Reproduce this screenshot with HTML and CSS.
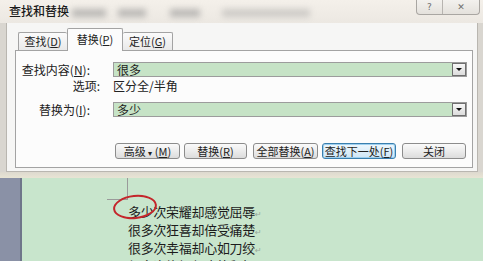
FILE: index.html
```html
<!DOCTYPE html>
<html lang="zh-CN">
<head>
    <meta charset="UTF-8">
    <title>查找和替换</title>
    <link rel="stylesheet" href="styles.css">
</head>
<body>
    <div class="window">
        <div class="titlebar">
            <span class="title">查找和替换</span>
            <span class="blur b1"></span>
            <span class="blur b2"></span>
            <span class="blur b3"></span>
            <span class="blur b4"></span>
            <div class="caption">
                <span class="cap-btn help">?</span>
                <span class="cap-btn close">✕</span>
            </div>
        </div>
        <div class="dialog">
            <div class="tabs">
                <span class="tab t1">查找(<u>D</u>)</span>
                <span class="tab active">替换(<u>P</u>)</span>
                <span class="tab t3">定位(<u>G</u>)</span>
            </div>
            <div class="panel">
                <div class="row">
                    <label class="lbl">查找内容(<u>N</u>):</label>
                    <div class="combo">
                        <span class="value">很多</span>
                        <span class="drop"></span>
                    </div>
                </div>
                <div class="row opts">
                    <span class="lbl short">选项:</span>
                    <span class="value">区分全/半角</span>
                </div>
                <div class="row replace">
                    <label class="lbl">替换为(<u>I</u>):</label>
                    <div class="combo">
                        <span class="value">多少</span>
                        <span class="drop"></span>
                    </div>
                </div>
                <div class="buttons">
                    <button class="btn w65">高级 <span class="arrow">▾</span> (<u>M</u>)</button>
                    <button class="btn w63">替换(<u>R</u>)</button>
                    <button class="btn w65 gap6">全部替换(<u>A</u>)</button>
                    <button class="btn w74 focus">查找下一处(<u>F</u>)</button>
                    <button class="btn w64 gap6">关闭</button>
                </div>
            </div>
        </div>
        <div class="frame-bottom"></div>
    </div>
    <div class="document">
        <div class="ruler"></div>
        <div class="page">
            <div class="text">
                <span class="corner"></span>
                <span class="circle"></span>
                <p>多少次荣耀却感觉屈辱<span class="mark">↵</span></p>
                <p>很多次狂喜却倍受痛楚<span class="mark">↵</span></p>
                <p>很多次幸福却心如刀绞<span class="mark">↵</span></p>
                <p>很多次坎坷却也能释怀<span class="mark">↵</span></p>
            </div>
        </div>
    </div>
</body>
</html>
```

FILE: styles.css
```css
* {
    box-sizing: border-box;
}
body {
    margin: 0;
    width: 483px;
    height: 261px;
    overflow: hidden;
    background-color: #c8e5cc;
    font-family: "Noto Sans CJK SC", sans-serif;
    font-size: 12px;
    color: #222;
}
.window {
    background-color: #d9d6d0;
}
.titlebar {
    height: 23px;
    display: flex;
    align-items: flex-start;
    position: relative;
    background: linear-gradient(to bottom, #f4f0ea, #ece8e2);
}
.title {
    margin: 3px 0 0 9px;
    font-size: 12px;
    line-height: 16px;
    color: #1a1a1a;
    font-weight: 500;
}
.blur {
    position: absolute;
    top: 9px;
    height: 8px;
    background-color: #8e8e8e;
    filter: blur(3px);
    opacity: 0.55;
}
.b1 { left: 72px; width: 34px; }
.b2 { left: 118px; width: 28px; }
.b3 { left: 170px; width: 30px; }
.b4 { left: 222px; width: 88px; opacity: 0.35; }
.caption {
    margin-left: auto;
    margin-right: 3px;
    display: flex;
    height: 15px;
    border: 1px solid #a9a6a2;
    border-top: none;
    border-radius: 0 0 4px 4px;
    background: linear-gradient(to bottom, #f3f1ee, #e4e1dc);
}
.cap-btn {
    display: flex;
    align-items: center;
    justify-content: center;
    font-family: "DejaVu Sans", sans-serif;
    font-size: 9px;
    color: #6e6e6e;
}
.help {
    width: 26px;
    border-right: 1px solid #b7b4b0;
}
.close {
    width: 36px;
}
.dialog {
    margin: 0 5px 0 6px;
    height: 149px;
    padding: 5px 4px 0 8px;
    border: 1px solid #b9b6b0;
    border-top: none;
    background-color: #f6f6f5;
}
.tabs {
    display: flex;
    align-items: flex-end;
    height: 22px;
    padding-left: 3px;
    position: relative;
    z-index: 1;
}
.tab {
    height: 18px;
    line-height: 17px;
    text-align: center;
    white-space: nowrap;
    font-size: 11px;
    border: 1px solid #a3a3a3;
    border-bottom: none;
    border-right: none;
    background: linear-gradient(to bottom, #fbfbfb, #e9e9e9);
    border-radius: 2px 2px 0 0;
}
.t1 { width: 49px; }
.t3 { width: 50px; border-right: 1px solid #a3a3a3; }
.tab.active {
    height: 23px;
    line-height: 20px;
    width: 56px;
    border-right: 1px solid #a3a3a3;
    background: #fcfcfc;
    margin-bottom: -1px;
}
.tab.active + .tab {
    border-left: none;
}
.panel {
    height: 118px;
    border: 1px solid #a3a3a3;
    background-color: #fcfcfc;
    padding: 11px 5px 0 0;
}
.row {
    display: flex;
    align-items: center;
    height: 15px;
}
.lbl {
    width: 97px;
    flex: none;
    padding-right: 23px;
    text-align: right;
    white-space: nowrap;
}
.lbl.short {
    padding-right: 13px;
}
.opts {
    margin-top: 1px;
    height: 14px;
}
.replace {
    margin-top: 10px;
}
.combo {
    flex: 1;
    height: 15px;
    display: flex;
    align-items: center;
    border: 1px solid #9c9c9c;
    background-color: #c6e3c6;
}
.combo .value {
    flex: 1;
    padding-left: 3px;
    line-height: 13px;
}
.drop {
    width: 14px;
    height: 13px;
    border: 1px solid #6f6f6f;
    background: linear-gradient(to bottom, #f7f7f7, #dcdcdc);
    position: relative;
}
.drop::after {
    content: "";
    position: absolute;
    left: 3px;
    top: 4px;
    border-left: 3px solid transparent;
    border-right: 3px solid transparent;
    border-top: 3px solid #111;
}
.buttons {
    display: flex;
    justify-content: flex-end;
    gap: 4px;
    margin-top: 26px;
    padding-right: 1px;
}
.btn {
    height: 16px;
    padding: 0;
    white-space: nowrap;
    font-family: "Noto Sans CJK SC", sans-serif;
    font-size: 11px;
    line-height: 14px;
    color: #222;
    border: 1px solid #8c8c8c;
    border-radius: 3px;
    background: linear-gradient(to bottom, #fafafa 0%, #ececec 50%, #dcdcdc 100%);
}
.gap6 { margin-left: 2px; }
.w63 { width: 63px; }
.w64 { width: 64px; }
.w65 { width: 65px; }
.w74 { width: 74px; }
.btn.focus {
    border-color: #3a7fae;
    background: linear-gradient(to bottom, #eef7fd, #cfe6f6);
    box-shadow: inset 0 0 0 1px #9fd0ef;
}
.arrow {
    font-size: 8px;
}
.frame-bottom {
    height: 6px;
    background: linear-gradient(to bottom, #ddd9cf, #e8e4d4);
}
.document {
    display: flex;
    height: 83px;
}
.ruler {
    width: 22px;
    background-color: #8a91a6;
    border-right: 2px solid #6f768a;
}
.page {
    flex: 1;
    padding: 25px 0 0 106px;
}
.text {
    position: relative;
    font-size: 13px;
    line-height: 18px;
    color: #1c1c1c;
}
.text p {
    margin: 0;
    height: 18px;
    letter-spacing: -0.3px;
    white-space: nowrap;
}
.mark {
    font-family: "DejaVu Sans", sans-serif;
    font-size: 8px;
    line-height: 0;
    color: #9aa89c;
}
.corner {
    position: absolute;
    left: -21px;
    top: -25px;
    width: 21px;
    height: 22px;
    border-right: 1px solid #9a9a9a;
    border-bottom: 1px solid #9a9a9a;
}
.circle {
    position: absolute;
    left: -15px;
    top: -8px;
    width: 44px;
    height: 24px;
    border: 2px solid #c4262b;
    border-radius: 50%;
    transform: rotate(-6deg);
}
```
